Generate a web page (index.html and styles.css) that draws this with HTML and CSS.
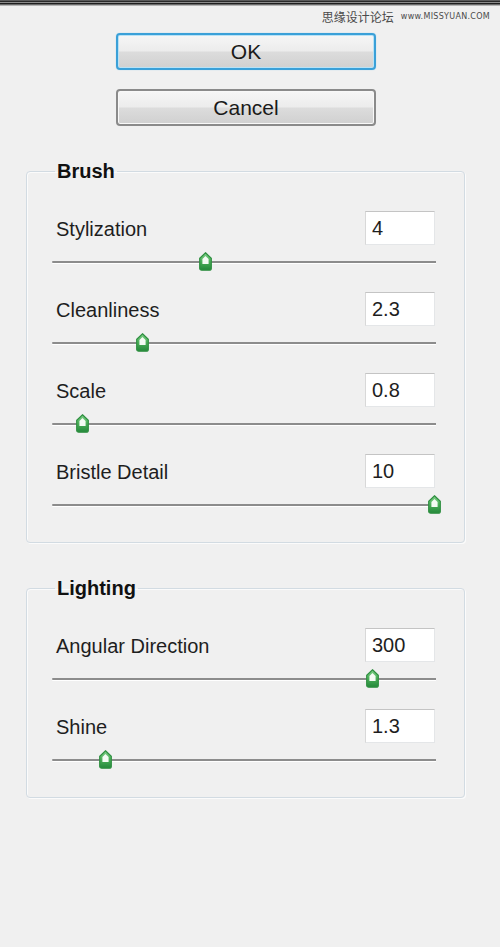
FILE: index.html
```html
<!DOCTYPE html>
<html>
<head>
<meta charset="utf-8">
<link rel="stylesheet" href="styles.css">
</head>
<body>
<div class="topbar"></div>
<div class="watermark"><span class="wm-cn">思缘设计论坛</span><span class="wm-en">www.MISSYUAN.COM</span></div>
<div class="buttons">
  <button class="btn btn-default">OK</button>
  <button class="btn">Cancel</button>
</div>

<fieldset class="group">
  <legend class="group-title">Brush</legend>
  <div class="row">
    <div class="head"><span class="label">Stylization</span><input class="value" value="4"></div>
    <div class="slider"><div class="track"></div><span class="thumb" style="left:39.8%"><svg width="13" height="19" viewBox="0 0 13 19"><use href="#thumb"/></svg></span></div>
  </div>
  <div class="row">
    <div class="head"><span class="label">Cleanliness</span><input class="value" value="2.3"></div>
    <div class="slider"><div class="track"></div><span class="thumb" style="left:23.4%"><svg width="13" height="19" viewBox="0 0 13 19"><use href="#thumb"/></svg></span></div>
  </div>
  <div class="row">
    <div class="head"><span class="label">Scale</span><input class="value" value="0.8"></div>
    <div class="slider"><div class="track"></div><span class="thumb" style="left:7.8%"><svg width="13" height="19" viewBox="0 0 13 19"><use href="#thumb"/></svg></span></div>
  </div>
  <div class="row">
    <div class="head"><span class="label">Bristle Detail</span><input class="value" value="10"></div>
    <div class="slider"><div class="track"></div><span class="thumb" style="left:99.5%"><svg width="13" height="19" viewBox="0 0 13 19"><use href="#thumb"/></svg></span></div>
  </div>
</fieldset>

<fieldset class="group group-lighting">
  <legend class="group-title">Lighting</legend>
  <div class="row">
    <div class="head"><span class="label">Angular Direction</span><input class="value" value="300"></div>
    <div class="slider"><div class="track"></div><span class="thumb" style="left:83.3%"><svg width="13" height="19" viewBox="0 0 13 19"><use href="#thumb"/></svg></span></div>
  </div>
  <div class="row">
    <div class="head"><span class="label">Shine</span><input class="value" value="1.3"></div>
    <div class="slider"><div class="track"></div><span class="thumb" style="left:13.8%"><svg width="13" height="19" viewBox="0 0 13 19"><use href="#thumb"/></svg></span></div>
  </div>
</fieldset>

<svg class="defs" width="0" height="0">
  <defs>
    <linearGradient id="tg" x1="0" y1="0" x2="0" y2="1">
      <stop offset="0" stop-color="#7fcf88"/>
      <stop offset="0.45" stop-color="#4fb25c"/>
      <stop offset="1" stop-color="#23883a"/>
    </linearGradient>
    <g id="thumb">
      <path d="M6.5 0.8 L12.3 6.3 L12.3 16.2 Q12.3 18.2 10.3 18.2 L2.7 18.2 Q0.7 18.2 0.7 16.2 L0.7 6.3 Z" fill="url(#tg)" stroke="#2f8f41" stroke-width="1.2"/>
      <path d="M6.5 4 L9.6 7 L9.6 12 L3.4 12 L3.4 7 Z" fill="#f4fbf4"/>
    </g>
  </defs>
</svg>
</body>
</html>
```
FILE: styles.css
```css
html, body {
  margin: 0;
  padding: 0;
}
body {
  width: 500px;
  height: 947px;
  background: #f0f0f0;
  font-family: "Liberation Sans", Arial, sans-serif;
  color: #1e1e1e;
  position: relative;
  overflow: hidden;
}
.topbar {
  height: 6px;
  background: linear-gradient(to bottom, #5a5a5a 0, #5a5a5a 1px, #2a2a2a 1px, #2a2a2a 2px, #8c8c8c 2px, #8c8c8c 3px, #1e1e1e 3px, #1e1e1e 4px, #6a6a6a 4px, #6a6a6a 5px, #b4b4b4 5px, #b4b4b4 6px);
}
.watermark {
  position: absolute;
  top: 8px;
  right: 10px;
  display: flex;
  align-items: center;
  gap: 7px;
  color: #4a4a4a;
}
.wm-cn {
  font-family: "Noto Sans CJK SC", sans-serif;
  font-size: 12px;
  line-height: 17px;
}
.wm-en {
  font-family: "DejaVu Sans", sans-serif;
  font-size: 8px;
  letter-spacing: 0.3px;
}
.buttons {
  display: flex;
  flex-direction: column;
  align-items: center;
  gap: 19px;
  padding: 27px 8px 0 0;
}
.btn {
  width: 260px;
  height: 37px;
  border: 2px solid #8a8a8a;
  border-radius: 4px;
  background: linear-gradient(to bottom, #f6f6f6 0%, #ececec 48%, #dcdcdc 52%, #d0d0d0 100%);
  font-family: "Liberation Sans", Arial, sans-serif;
  font-size: 21px;
  color: #1a1a1a;
  padding: 0;
  box-shadow: inset 0 0 0 1px #f8f8f8;
}
.btn-default {
  border-color: #3aa0d8;
  box-shadow: inset 0 0 0 1px #b8e2f6, 0 0 1px #7cc4ea;
}
.group {
  margin: 34px 0 0 26px;
  width: 439px;
  box-sizing: border-box;
  border: 1px solid #d2dbe2;
  border-radius: 4px;
  box-shadow: inset 1px 1px 0 #fbfbfb, 1px 1px 0 #fbfbfb;
  padding: 29px 29px 7px 29px;
  min-width: 0;
}
.group-lighting {
  margin-top: 34px;
}
.group-title {
  font-weight: bold;
  font-size: 20px;
  line-height: 22px;
  padding: 0 2px;
  margin-left: -1px;
  color: #111;
}
.row {
  height: 81px;
}
.head {
  display: flex;
  justify-content: space-between;
  align-items: center;
  height: 34px;
}
.label {
  font-size: 20px;
  color: #1e1e1e;
  padding-top: 3px;
}
.value {
  width: 70px;
  height: 34px;
  box-sizing: border-box;
  border: 1px solid #e4e6e8;
  border-top-color: #c4c4c4;
  border-left-color: #d8d8d8;
  background: #fff;
  font-family: "Liberation Sans", Arial, sans-serif;
  font-size: 20px;
  color: #1e1e1e;
  padding: 0 0 0 6px;
  margin-right: 0;
  outline: none;
}
.slider {
  position: relative;
  height: 20px;
  margin: 7px 0 0 -4px;
  width: 384px;
}
.track {
  position: absolute;
  left: 0;
  right: 0;
  top: 9px;
  height: 2px;
  background: #8c8c8c;
  border-radius: 2px 0 0 2px;
  box-shadow: 0 1px 0 #ffffff;
}
.thumb {
  position: absolute;
  top: 0;
  width: 13px;
  height: 19px;
  margin-left: -6px;
  line-height: 0;
}
.thumb svg {
  display: block;
}
.defs {
  position: absolute;
  width: 0;
  height: 0;
}
```
